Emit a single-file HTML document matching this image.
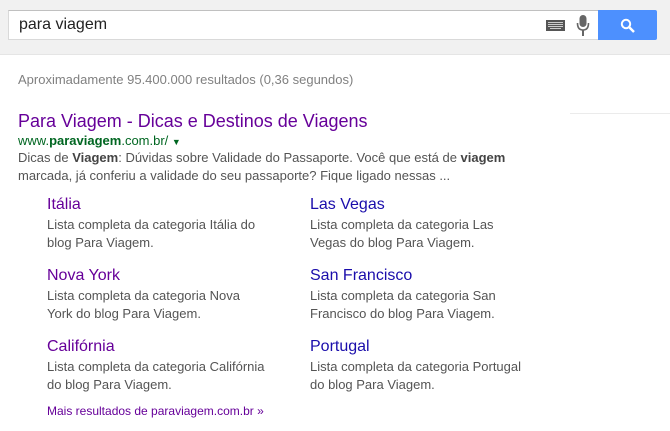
<!DOCTYPE html>
<html><head><meta charset="utf-8"><style>
body{margin:0;width:670px;height:431px;background:#fff;font-family:"Liberation Sans",Arial,sans-serif;position:relative;overflow:hidden}
.hdr{position:absolute;left:0;top:0;width:670px;height:54px;background:#f1f1f1;border-bottom:1px solid #e5e5e5}
.box{position:absolute;left:8px;top:10px;width:589px;height:28px;background:#fff;border:1px solid #d9d9d9;border-top-color:#c0c0c0}
.q{position:absolute;left:10px;top:5px;font-size:16px;color:#222}
.btn{position:absolute;left:598px;top:10px;width:59px;height:30px;background:#4d90fe;border-radius:0 2px 2px 0}
.a{position:absolute;white-space:nowrap}
.t{color:#660099;font-size:18px}
.s{font-size:16px}
.d{font-size:13px;color:#545454;line-height:18px}
.p{color:#609}.b{color:#1a0dab}
</style></head><body>
<div class="hdr">
<div class="box"><div class="q">para viagem</div>
<svg style="position:absolute;left:537px;top:8px" width="19" height="13"><rect x="0" y="1" width="19" height="11" fill="#555"/><g fill="#ccc"><rect x="2" y="3" width="15" height="1"/><rect x="2" y="5" width="15" height="1"/><rect x="2" y="7" width="15" height="1"/><rect x="4" y="9" width="11" height="1"/></g></svg>
<svg style="position:absolute;left:567px;top:4px" width="14" height="21"><rect x="3.5" y="0" width="7" height="12" rx="3.5" fill="#666"/><path d="M1.5 8 Q1.5 15 7 15 Q12.5 15 12.5 8" stroke="#666" stroke-width="1.6" fill="none"/><rect x="6" y="15" width="2" height="6" fill="#666"/></svg>
</div>
<div class="btn"><svg style="position:absolute;left:22px;top:8px" width="16" height="16"><circle cx="6" cy="6" r="4.2" stroke="#fff" stroke-width="2" fill="none"/><path d="M9 9 L14 14" stroke="#fff" stroke-width="2.5"/></svg></div>
</div>
<div style="position:absolute;left:570px;top:113px;width:100px;height:1px;background:#ebebeb"></div>
<div class="a" style="left:18px;top:72px;font-size:13px;color:#808080">Aproximadamente 95.400.000 resultados (0,36 segundos)</div>
<div class="a t" style="left:18px;top:111px">Para Viagem - Dicas e Destinos de Viagens</div>
<div class="a" style="left:18px;top:133px;font-size:13px;color:#006621">www.<b>paraviagem</b>.com.br/ <span style="font-size:9px">▼</span></div>
<div class="a d" style="left:18px;top:149px">Dicas de <b style="color:#444">Viagem</b>: Dúvidas sobre Validade do Passaporte. Você que está de <b style="color:#444">viagem</b><br>marcada, já conferiu a validade do seu passaporte? Fique ligado nessas ...</div>

<div class="a s p" style="left:47px;top:196px">Itália</div>
<div class="a d" style="left:47px;top:216px">Lista completa da categoria Itália do<br>blog Para Viagem.</div>
<div class="a s b" style="left:310px;top:196px">Las Vegas</div>
<div class="a d" style="left:310px;top:216px">Lista completa da categoria Las<br>Vegas do blog Para Viagem.</div>

<div class="a s p" style="left:47px;top:267px">Nova York</div>
<div class="a d" style="left:47px;top:287px">Lista completa da categoria Nova<br>York do blog Para Viagem.</div>
<div class="a s b" style="left:310px;top:267px">San Francisco</div>
<div class="a d" style="left:310px;top:287px">Lista completa da categoria San<br>Francisco do blog Para Viagem.</div>

<div class="a s p" style="left:47px;top:338px">Califórnia</div>
<div class="a d" style="left:47px;top:358px">Lista completa da categoria Califórnia<br>do blog Para Viagem.</div>
<div class="a s b" style="left:310px;top:338px">Portugal</div>
<div class="a d" style="left:310px;top:358px">Lista completa da categoria Portugal<br>do blog Para Viagem.</div>

<div class="a" style="left:47px;top:404px;font-size:12px;color:#609">Mais resultados de paraviagem.com.br »</div>
</body></html>
